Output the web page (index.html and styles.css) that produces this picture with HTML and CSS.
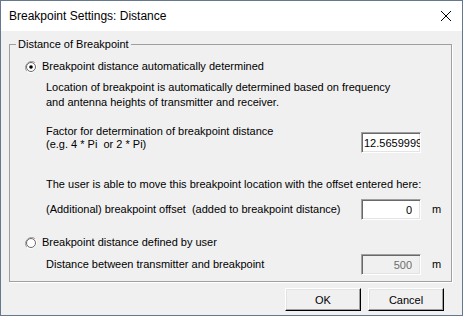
FILE: index.html
```html
<!DOCTYPE html>
<html lang="en">
<head>
  <meta charset="UTF-8">
  <title>Breakpoint Settings: Distance</title>
  <link rel="stylesheet" href="styles.css">
</head>
<body>

  <div class="window">
    <div class="titlebar">
      <span class="title">Breakpoint Settings: Distance</span>
      <svg class="close" width="12" height="12" viewBox="0 0 12 12">
        <path d="M1 1L11 11M11 1L1 11" stroke="#000" stroke-width="1" fill="none"/>
      </svg>
    </div>

    <div class="client">
      <fieldset class="group">
        <legend>Distance of Breakpoint</legend>

        <div class="option first">
          <svg class="radio" width="12" height="12" viewBox="0 0 12 12">
            <path d="M1.8 10.2A6 6 0 0 1 10.2 1.8" stroke="#a0a0a0" fill="none"/>
            <path d="M10.2 1.8A6 6 0 0 1 1.8 10.2" stroke="#fff" fill="none"/>
            <circle cx="6" cy="6" r="4.5" fill="#fff" stroke="#696969"/>
            <circle cx="6" cy="6" r="1.8" fill="#000"/>
          </svg>
          <span>Breakpoint distance automatically determined</span>
        </div>

        <p class="desc">Location of breakpoint is automatically determined based on frequency<br>and antenna heights of transmitter and receiver.</p>

        <div class="field factor">
          <span class="field-label">Factor for determination of breakpoint distance<br>(e.g. 4 * Pi &nbsp;or 2 * Pi)</span>
          <input class="edit left" type="text" value="12.5659999">
        </div>

        <p class="note">The user is able to move this breakpoint location with the offset entered here:</p>

        <div class="field offset">
          <span class="field-label">(Additional) breakpoint offset &nbsp;(added to breakpoint distance)</span>
          <input class="edit" type="text" value="0">
          <span class="unit">m</span>
        </div>

        <div class="option second">
          <svg class="radio" width="12" height="12" viewBox="0 0 12 12">
            <path d="M1.8 10.2A6 6 0 0 1 10.2 1.8" stroke="#a0a0a0" fill="none"/>
            <path d="M10.2 1.8A6 6 0 0 1 1.8 10.2" stroke="#fff" fill="none"/>
            <circle cx="6" cy="6" r="4.5" fill="#fff" stroke="#696969"/>
          </svg>
          <span>Breakpoint distance defined by user</span>
        </div>

        <div class="field distance">
          <span class="field-label">Distance between transmitter and breakpoint</span>
          <input class="edit" type="text" value="500" disabled>
          <span class="unit">m</span>
        </div>
      </fieldset>

      <div class="buttons">
        <button>OK</button>
        <button>Cancel</button>
      </div>
    </div>
  </div>

</body>
</html>
```

FILE: styles.css
```css
body {
  margin: 0;
  font-family: "Liberation Sans", Arial, sans-serif;
  font-size: 11px;
  color: #000;
}
.window {
  box-sizing: border-box;
  width: 463px;
  height: 316px;
  border: 1px solid #64788f;
  display: flex;
  flex-direction: column;
  overflow: hidden;
}
.titlebar {
  height: 30px;
  background: #fff;
  display: flex;
  align-items: center;
  justify-content: space-between;
  padding: 0 10px 0 8px;
}
.title {
  font-family: "Liberation Sans", Arial, sans-serif;
  font-size: 12px;
}
.close {
  display: block;
}
.client {
  flex: 1;
  background: #f0f0f0;
  padding: 7px 10px 0 8px;
}
.group {
  margin: 0;
  padding: 0 0 6px 0;
  border: 1px solid #a0a0a0;
  box-shadow: 1px 1px 0 #fff;
}
.group legend {
  margin-left: 6px;
  padding: 0 2px;
  line-height: 13px;
}
.option {
  display: flex;
  align-items: center;
  height: 13px;
  line-height: 13px;
  padding-left: 15px;
  gap: 5px;
}
.option.first {
  margin-top: 9px;
}
.option.second {
  margin-top: 16px;
}
.radio {
  display: block;
}
.desc {
  margin: 7px 0 0 0;
  padding-left: 36px;
  line-height: 15px;
}
.note {
  margin: 25px 0 0 0;
  padding-left: 36px;
  line-height: 13px;
}
.field {
  display: flex;
  align-items: center;
  padding-left: 36px;
  line-height: 13px;
}
.field-label {
  width: 315px;
  flex: none;
}
.factor {
  margin-top: 15px;
  align-items: flex-start;
}
.factor .edit {
  margin-top: 7px;
}
.offset {
  margin-top: 8px;
}
.distance {
  margin-top: 5px;
}
.edit {
  box-sizing: border-box;
  width: 60px;
  height: 21px;
  margin: 0;
  padding: 0 8px 0 2px;
  font-family: inherit;
  font-size: 11px;
  text-align: right;
  background: #fff;
  color: #000;
  border: 1px solid;
  border-color: #a0a0a0 #fff #fff #a0a0a0;
  box-shadow: inset 1px 1px #696969, inset -1px -1px #e3e3e3;
  outline: none;
}
.edit.left {
  text-align: left;
  padding-right: 0;
}
.edit:disabled {
  background: #f0f0f0;
  color: #6d6d6d;
}
.unit {
  margin-left: 11px;
}
.buttons {
  display: flex;
  justify-content: flex-end;
  gap: 7px;
  margin: 6px 8px 0 0;
}
.buttons button {
  box-sizing: border-box;
  width: 76px;
  height: 23px;
  font-family: inherit;
  font-size: 11px;
  background: #f0f0f0;
  border: 1px solid;
  border-color: #fff #000 #000 #fff;
  box-shadow: inset -1px -1px #a0a0a0, inset 1px 1px #e3e3e3;
  padding: 0;
}
```
